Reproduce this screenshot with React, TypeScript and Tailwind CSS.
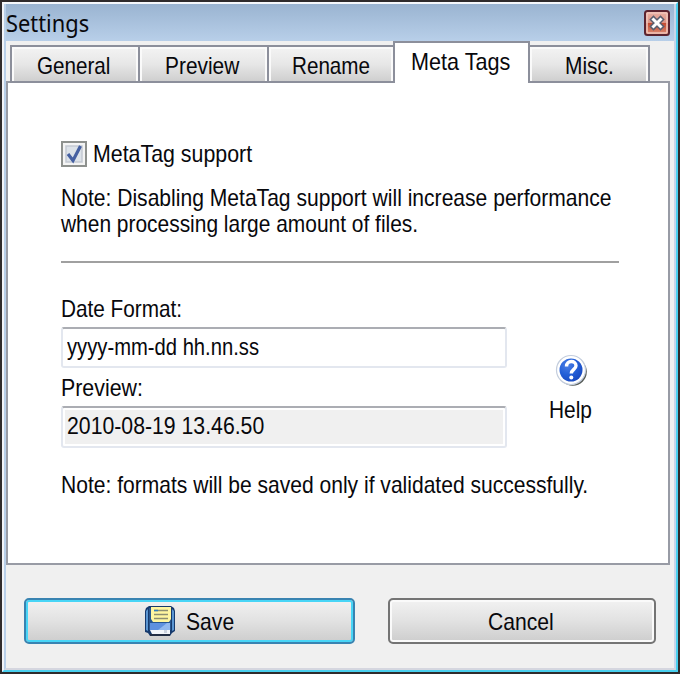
import { ReactNode, useState } from 'react';
import clsx from 'clsx';

const tabs = [
  { name: 'General', size: 'w-[130px]', text: 'ml-[25px] scale-x-[.86]' },
  { name: 'Preview', size: 'w-[131px] -ml-[2px]', text: 'ml-[25px] scale-x-[.87]' },
  { name: 'Rename', size: 'w-[128px] -ml-[2px]', text: 'ml-[23px] scale-x-[.86]' },
  { name: 'Meta Tags', size: 'z-10 w-[137px] -ml-[2px]', text: 'ml-[16px] scale-x-[.9]' },
  { name: 'Misc.', size: 'w-[122px] -ml-[2px]', text: 'ml-[35px] scale-x-[.87]' },
];

// condensed label, keeps the narrow look of the old system font
function Label({ children, className }: { children: ReactNode; className?: string }) {
  return (
    <span className={clsx('block w-max origin-left whitespace-pre', className)}>
      {children}
    </span>
  );
}

function CloseIcon() {
  return (
    <svg width="26" height="26" viewBox="0 0 26 26">
      <defs>
        <linearGradient id="close" x1="0" y1="0" x2="0" y2="1">
          <stop offset="0" stopColor="#eab4a8" />
          <stop offset=".48" stopColor="#dc9384" />
          <stop offset=".5" stopColor="#c4492f" />
          <stop offset="1" stopColor="#dd9078" />
        </linearGradient>
      </defs>
      <rect x="1" y="1" width="24" height="24" rx="2.5" fill="url(#close)" stroke="#5b2430" strokeWidth="2" />
      <rect x="3" y="3" width="20" height="20" rx="1" fill="none" stroke="#f1c5ba" strokeWidth="1.6" />
      <path d="M9.5 9.5l7 7M16.5 9.5l-7 7" stroke="#5a6070" strokeWidth="6" strokeLinecap="square" />
      <path d="M9.5 9.5l7 7M16.5 9.5l-7 7" stroke="#fff" strokeWidth="3" strokeLinecap="square" />
    </svg>
  );
}

function SaveIcon() {
  return (
    <svg width="32" height="32" viewBox="0 0 32 32">
      <path d="M5 1h22l3 2 1 3v20l-3 2-2 3H6l-2-3-3-1V6l1-3z" fill="#163a6d" />
      <path d="M2 6l2-2v22l-2-1zM28 4l2 2v19l-2 1z" fill="#5b96d2" />
      <path d="M5 3h22v22H5z" fill="#27568f" />
      <path d="M7 2h20v12l-2 3H9l-2-3z" fill="#fff6a0" />
      <path d="M10 5.5h14M10 9.5h14M10 13.5h14" stroke="#8d8f72" strokeWidth="1.3" />
      <path d="M10 5.5h4" stroke="#337fba" strokeWidth="1.5" />
      <path d="M6 18h20v7H6z" fill="#5e91df" />
      <path d="M14 25l9-7h3v7z" fill="#91b9ef" />
      <path d="M6 25h20v4H8z" fill="#f3f6fb" />
      <path d="M20 25h3v3h-3z" fill="#ccd3df" />
      <path d="M6 30h20" stroke="#292b38" strokeWidth="1.5" />
    </svg>
  );
}

function HelpIcon() {
  return (
    <svg width="34" height="34" viewBox="0 0 34 34">
      <defs>
        <radialGradient id="help" cx=".35" cy=".3" r=".8">
          <stop offset="0" stopColor="#4c7ee4" />
          <stop offset=".5" stopColor="#2460d8" />
          <stop offset="1" stopColor="#1746bd" />
        </radialGradient>
      </defs>
      <circle cx="17.8" cy="17.8" r="14" fill="#555b57" />
      <circle cx="16" cy="16" r="14.5" fill="#fff" stroke="#c3cddd" strokeWidth="1.2" />
      <circle cx="16" cy="16" r="11.5" fill="url(#help)" />
      <path d="M11.5 12.5c0-6.5 9.5-6.5 9.5-.7 0 3.5-4.7 3.7-4.7 7.7" fill="none" stroke="#fff" strokeWidth="3.4" />
      <circle cx="16.3" cy="23.5" r="2" fill="#fff" />
    </svg>
  );
}

export default function App() {
  const [active, setActive] = useState('Meta Tags');
  const [enabled, setEnabled] = useState(true);
  const [format, setFormat] = useState('yyyy-mm-dd hh.nn.ss');

  return (
    <div className="h-[674px] w-[680px] bg-[#2f2b2c] p-[2px] font-['Liberation_Sans',sans-serif] text-[24px] leading-[26px] text-[#08080c]">
      <div className="h-[670px] border-2 border-t-[#f5f8fc] border-r-[#49cfee] border-b-[#49cfee] border-l-[#f1f3f7]">
        <div className="flex h-[666px] flex-col border-x-2 border-b-2 border-l-[#b8cfe9] border-r-[#c9d5e8] border-b-[#d5d6df] bg-[#f0f0f0]">
          <header className="flex h-[37px] shrink-0 items-center justify-between bg-linear-to-b from-[#9ab4d1] to-[#b8cfe9] pr-[4px]">
            <h1 className="origin-left scale-x-[.91] font-['Noto_Sans',sans-serif] text-[24px]">Settings</h1>
            <button className="mt-[1px]" aria-label="Close">
              <CloseIcon />
            </button>
          </header>

          <nav className="z-10 -mb-[2px] flex h-[42px] shrink-0 items-end pl-[4px]">
            {tabs.map((tab) => (
              <button
                key={tab.name}
                onClick={() => setActive(tab.name)}
                className={clsx(
                  'flex border-2 border-[#8c8f9b]',
                  tab.size,
                  tab.name === active
                    ? 'h-[42px] border-b-0 bg-white pt-[6px]'
                    : 'h-[38px] bg-linear-to-b from-[#f3f3f3] from-0% via-[#e7e7e7] via-50% to-[#cfcfcf] to-100% pt-[6px] shadow-[inset_0_2px_0_#fafafa,inset_2px_0_0_#fafafa,inset_-2px_0_0_#fafafa]',
                )}>
                <Label className={tab.text}>{tab.name}</Label>
              </button>
            ))}
          </nav>

          <main className="flex h-[484px] w-[664px] shrink-0 flex-col border-2 border-[#989ba5] bg-white pr-[49px] pl-[53px]">
            <label className="mt-[58px] flex h-[26px] items-center">
              <input
                type="checkbox"
                className="sr-only"
                checked={enabled}
                onChange={(e) => setEnabled(e.target.checked)}
              />
              <svg width="26" height="26" viewBox="0 0 26 26">
                <path d="M1 1h24v24H1z" fill="#f4f4f4" stroke="#8e918e" strokeWidth="2" />
                <path d="M5 5h16v16H5z" fill="#dce2e9" stroke="#c3c9d2" strokeWidth="1.5" />
                {enabled && (
                  <path d="M7 13l5 6.5L19.5 5" fill="none" stroke="#4560a2" strokeWidth="3.2" />
                )}
              </svg>
              <Label className="ml-[6px] scale-x-[.89]">MetaTag support</Label>
            </label>
            <div className="mt-[18px]">
              <Label className="scale-x-[.878]">Note: Disabling MetaTag support will increase performance</Label>
              <Label className="scale-x-[.872]">when processing large amount of files.</Label>
            </div>
            <hr className="mt-[24px] w-[558px] border-t-2 border-[#a0a0a0]" />

            <div className="mt-[33px] flex">
              <div className="w-[446px]">
                <Label className="scale-x-[.865]">Date Format:</Label>
                <div className="mt-[5px] h-[41px] rounded-[3px] border-2 border-[#e3e7ef] border-t-[#abadb3] pt-[5px] pl-[4px]">
                  <input
                    className="block h-[26px] w-[480px] origin-left scale-x-[.842] bg-transparent outline-none"
                    value={format}
                    onChange={(e) => setFormat(e.target.value)}
                  />
                </div>
                <Label className="mt-[7px] scale-x-[.89]">Preview:</Label>
                <div className="mt-[5px] h-[42px] rounded-[3px] border-2 border-[#e3e7ef] border-t-[#abadb3] bg-[#f0f0f0] pt-[5px] pl-[4px] shadow-[inset_0_0_0_2px_#fff]">
                  <Label className="scale-x-[.885]">2010-08-19 13.46.50</Label>
                </div>
              </div>
              <button className="mt-[58px] ml-[41px] flex w-[46px] flex-col items-start self-start">
                <span className="ml-[7px]">
                  <HelpIcon />
                </span>
                <Label className="mt-[9px] ml-[1px] scale-x-[.87]">Help</Label>
              </button>
            </div>
            <Label className="mt-[24px] scale-x-[.877]">Note: formats will be saved only if validated successfully.</Label>
          </main>

          <footer className="mt-[33px] flex gap-[33px] pl-[18px]">
            <button className="flex h-[46px] w-[331px] items-center rounded-[5px] border-2 border-[#3883b1] bg-linear-to-b from-[#f2f2f2] from-0% via-[#e2e2e2] via-49% to-[#cdcdcd] to-100% pl-[118px] shadow-[inset_0_0_0_2px_#48d5f6]">
              <SaveIcon />
              <Label className="mt-[2px] ml-[10px] scale-x-[.88]">Save</Label>
            </button>
            <button className="flex h-[46px] w-[268px] items-center rounded-[5px] border-2 border-[#747474] bg-linear-to-b from-[#f2f2f2] from-0% via-[#e2e2e2] via-49% to-[#cdcdcd] to-100% pl-[98px] shadow-[inset_0_0_0_2px_#fafafa]">
              <Label className="mt-[2px] scale-x-[.88]">Cancel</Label>
            </button>
          </footer>
        </div>
      </div>
    </div>
  );
}
